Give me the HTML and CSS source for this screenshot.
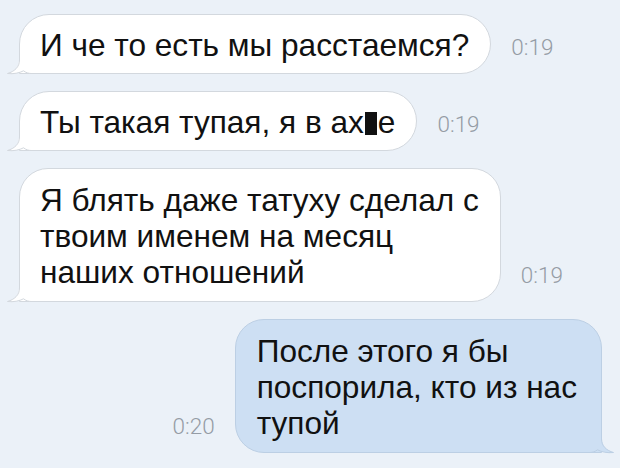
FILE: index.html
```html
<!DOCTYPE html>
<html lang="ru">
<head>
	<meta charset="UTF-8">
	<title>Диалог</title>
	<link rel="stylesheet" href="styles.css">
</head>
<body>
	<div class="chat">
		<div class="row">
			<div class="bubble in">
				И че то есть мы расстаемся?
				<svg class="tail" width="24" height="24" viewBox="0 0 24 24"><path class="tail-fill" d="M12 0 L12 10 C12 17 7.5 21.5 0.5 23.5 C6.5 24.2 12.5 23 16.5 20.8 C19 22.8 22 23.5 24 23.5 L24 0 Z"/><path class="tail-line" d="M12.5 0 L12.5 10 C12.5 17 7.5 21.5 0.5 23.5 C6.5 24.2 12.5 23 16.5 20.8 C19 22.8 22 23.5 24 23.5"/></svg>
			</div>
			<span class="time">0:19</span>
		</div>
		<div class="row">
			<div class="bubble in">
				Ты такая тупая, я в ах<span class="censor"></span>е
				<svg class="tail" width="24" height="24" viewBox="0 0 24 24"><path class="tail-fill" d="M12 0 L12 10 C12 17 7.5 21.5 0.5 23.5 C6.5 24.2 12.5 23 16.5 20.8 C19 22.8 22 23.5 24 23.5 L24 0 Z"/><path class="tail-line" d="M12.5 0 L12.5 10 C12.5 17 7.5 21.5 0.5 23.5 C6.5 24.2 12.5 23 16.5 20.8 C19 22.8 22 23.5 24 23.5"/></svg>
			</div>
			<span class="time">0:19</span>
		</div>
		<div class="row">
			<div class="bubble in multi">
				Я блять даже татуху сделал с<br>твоим именем на месяц<br>наших отношений
				<svg class="tail" width="24" height="24" viewBox="0 0 24 24"><path class="tail-fill" d="M12 0 L12 10 C12 17 7.5 21.5 0.5 23.5 C6.5 24.2 12.5 23 16.5 20.8 C19 22.8 22 23.5 24 23.5 L24 0 Z"/><path class="tail-line" d="M12.5 0 L12.5 10 C12.5 17 7.5 21.5 0.5 23.5 C6.5 24.2 12.5 23 16.5 20.8 C19 22.8 22 23.5 24 23.5"/></svg>
			</div>
			<span class="time">0:19</span>
		</div>
		<div class="row out">
			<span class="time">0:20</span>
			<div class="bubble outgoing multi">
				После этого я бы<br>поспорила, кто из нас<br>тупой
				<svg class="tail" width="24" height="24" viewBox="0 0 24 24"><path class="tail-fill" d="M12 0 L12 10 C12 17 7.5 21.5 0.5 23.5 C6.5 24.2 12.5 23 16.5 20.8 C19 22.8 22 23.5 24 23.5 L24 0 Z"/><path class="tail-line" d="M12.5 0 L12.5 10 C12.5 17 7.5 21.5 0.5 23.5 C6.5 24.2 12.5 23 16.5 20.8 C19 22.8 22 23.5 24 23.5"/></svg>
			</div>
		</div>
	</div>
</body>
</html>
```

FILE: styles.css
```css
*{
	margin:0;
	padding:0;
	box-sizing:border-box;
}
html,body{
	width:620px;
	height:468px;
	overflow:hidden;
}
body{
	background:#ebf1f8;
	font-family:"Liberation Sans",Arial,sans-serif;
	color:#111;
}
.chat{
	display:flex;
	flex-direction:column;
	gap:17px;
	padding:14px 18px 0 19px;
}
.row{
	display:flex;
	align-items:flex-end;
}
.row.out{
	justify-content:flex-end;
}
.bubble{
	position:relative;
	font-size:31.6px;
	line-height:36px;
	padding:12px 21px 10px 20px;
	border-radius:30px;
	border-bottom-left-radius:0;
	background:#fff;
	border:1px solid #d3d8de;
	white-space:nowrap;
}
.bubble.multi{
	padding:13px 21px 11px 20px;
	border-radius:29px;
	border-bottom-left-radius:0;
}
.bubble.outgoing{
	background:#cddff3;
	border-color:#bccfe4;
	border-radius:29px;
	border-bottom-right-radius:0;
	padding:13px 24px 11px 21px;
}
.tail{
	position:absolute;
	left:-13px;
	bottom:-1px;
	overflow:visible;
}
.tail-fill{
	fill:#fff;
}
.tail-line{
	fill:none;
	stroke:#d3d8de;
	stroke-width:1;
}
.outgoing .tail{
	left:auto;
	right:-13px;
	transform:scaleX(-1);
}
.outgoing .tail-fill{
	fill:#cddff3;
}
.outgoing .tail-line{
	stroke:#bccfe4;
}
.censor{
	display:inline-block;
	width:12px;
	height:23px;
	background:#111;
	vertical-align:-2px;
	margin:0 1px;
}
.time{
	font-family:Roboto,"Liberation Sans",sans-serif;
	font-weight:300;
	font-size:22.5px;
	line-height:24px;
	color:#959ca5;
	margin:0 0 15px 20px;
}
.out .time{
	margin:0 20px 15px 0;
}
```
